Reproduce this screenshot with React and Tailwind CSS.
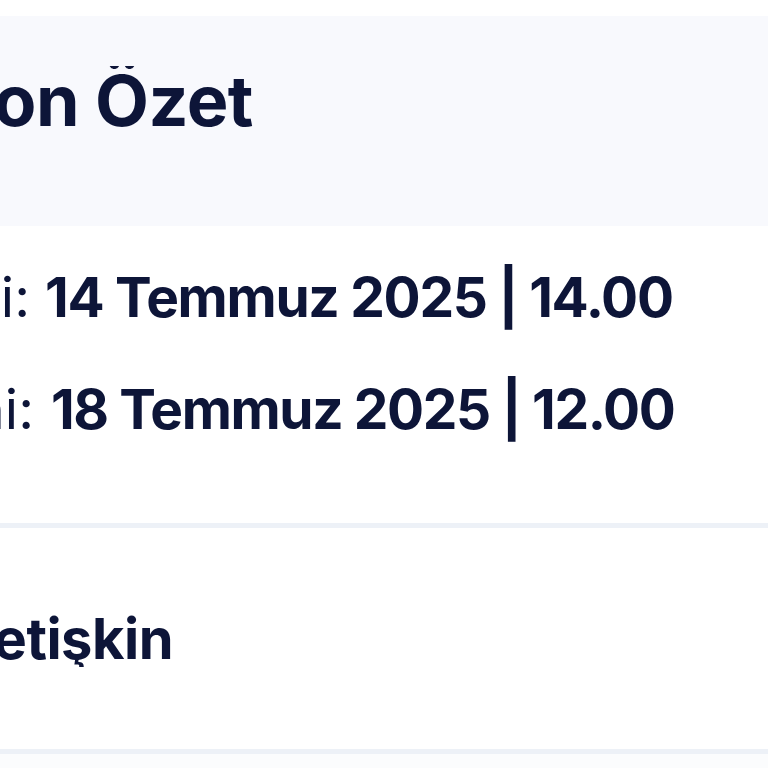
export default function App() {
  const font = { fontFamily: "Inter, 'Noto Sans', sans-serif" };
  return (
    <div className="min-h-[768px] w-[768px] bg-white text-[#0d1538] overflow-hidden" style={font}>
      <div className="h-[16px]" />
      <div className="h-[210px] bg-[#f8f9fd] flex items-start pt-[50px]">
        <div className="w-[253px] overflow-hidden flex justify-end shrink-0">
          <span className="whitespace-nowrap text-[70px] leading-[70px] font-bold tracking-[-0.5px]">Rezervasyon Özet</span>
        </div>
      </div>
      <div className="pt-[44px] pb-[86px] flex flex-col gap-[57px]">
        <div className="flex items-baseline whitespace-nowrap">
          <div className="w-[30px] overflow-hidden flex justify-end shrink-0">
            <span className="text-[55px] leading-[55px] font-normal">Giriş Tarihi:</span>
          </div>
          <span className="ml-[15px] text-[55px] leading-[55px] font-bold tracking-[-1.3px]">14 Temmuz 2025 | 14.00</span>
        </div>
        <div className="flex items-baseline whitespace-nowrap">
          <div className="w-[34px] overflow-hidden flex justify-end shrink-0">
            <span className="text-[55px] leading-[55px] font-normal">Çıkış Tarihi:</span>
          </div>
          <span className="ml-[17px] text-[55px] leading-[55px] font-bold tracking-[-1.4px]">18 Temmuz 2025 | 12.00</span>
        </div>
      </div>
      <div className="h-[5px] bg-[#edf1f7]" />
      <div className="h-[221px] flex items-center">
        <div className="w-[173px] overflow-hidden flex justify-end shrink-0">
          <span className="whitespace-nowrap text-[56px] leading-[56px] font-bold tracking-[-0.5px]">2 Yetişkin</span>
        </div>
      </div>
      <div className="h-[5px] bg-[#edf1f7]" />
      <div className="h-[200px] bg-[#fbfcfd]" />
    </div>
  );
}
